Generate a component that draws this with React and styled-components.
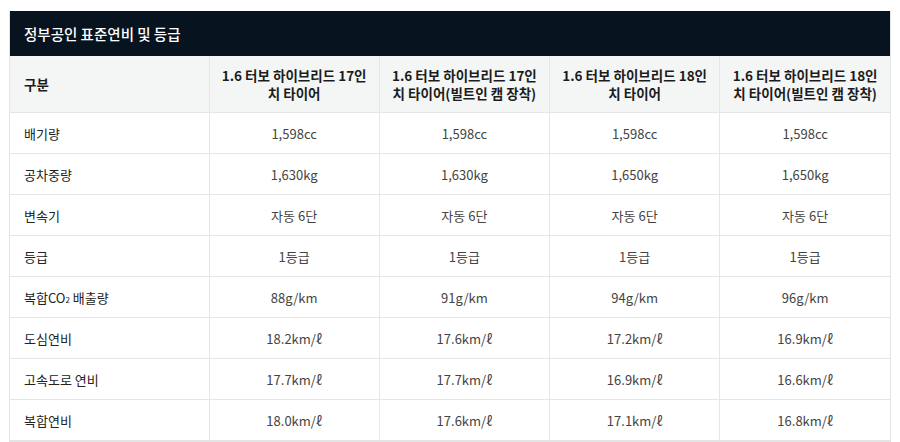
import React from "react";
import styled, { createGlobalStyle } from "styled-components";

const Global = createGlobalStyle`
  html, body { margin: 0; padding: 0; background: #ffffff; }
  body { font-family: "Noto Sans CJK KR", "Noto Sans", sans-serif; }
`;

const Page = styled.div`
  padding: 11px 9px 0 9px;
  width: 882px;
`;

const Panel = styled.section`
  border: 1px solid #e2e4e6;
  border-top: none;
`;

const Title = styled.h2`
  margin: 0;
  height: 45px;
  display: flex;
  align-items: center;
  padding: 0 14px;
  background: #07131f;
  color: #ffffff;
  font-size: 14.5px;
  font-weight: 500;
`;

const Table = styled.table`
  width: 100%;
  border-collapse: collapse;
  table-layout: fixed;
`;

const Th = styled.th`
  background: #f4f6f6;
  height: 56px;
  padding: 0 12px;
  font-size: 13.5px;
  font-weight: 700;
  color: #1c1c1c;
  line-height: 18px;
  text-align: ${(p) => (p.$first ? "left" : "center")};
  padding-left: ${(p) => (p.$first ? "14px" : "12px")};
  border-left: ${(p) => (p.$first ? "none" : "1px solid #e4e6e8")};
  border-bottom: 1px solid #e4e6e8;
`;

const Td = styled.td`
  height: 40px;
  padding: 0 10px;
  font-size: 13px;
  color: ${(p) => (p.$label ? "#222222" : "#444444")};
  text-align: ${(p) => (p.$label ? "left" : "center")};
  padding-left: ${(p) => (p.$label ? "14px" : "10px")};
  border-left: ${(p) => (p.$label ? "none" : "1px solid #e4e6e8")};
  border-bottom: 1px solid #e4e6e8;
`;

const Row = styled.tr``;

const Sub = styled.span`
  font-size: 8px;
  vertical-align: baseline;
`;

const headers = [
  "1.6 터보 하이브리드 17인치 타이어",
  "1.6 터보 하이브리드 17인치 타이어(빌트인 캠 장착)",
  "1.6 터보 하이브리드 18인치 타이어",
  "1.6 터보 하이브리드 18인치 타이어(빌트인 캠 장착)",
];

const rows = [
  { label: "배기량", values: ["1,598cc", "1,598cc", "1,598cc", "1,598cc"] },
  { label: "공차중량", values: ["1,630kg", "1,630kg", "1,650kg", "1,650kg"] },
  { label: "변속기", values: ["자동 6단", "자동 6단", "자동 6단", "자동 6단"] },
  { label: "등급", values: ["1등급", "1등급", "1등급", "1등급"] },
  {
    label: (
      <>
        복합CO<Sub>2</Sub> 배출량
      </>
    ),
    values: ["88g/km", "91g/km", "94g/km", "96g/km"],
  },
  { label: "도심연비", values: ["18.2km/ℓ", "17.6km/ℓ", "17.2km/ℓ", "16.9km/ℓ"] },
  { label: "고속도로 연비", values: ["17.7km/ℓ", "17.7km/ℓ", "16.9km/ℓ", "16.6km/ℓ"] },
  { label: "복합연비", values: ["18.0km/ℓ", "17.6km/ℓ", "17.1km/ℓ", "16.8km/ℓ"] },
];

export default function App() {
  return (
    <Page>
      <Global />
      <Panel>
        <Title>정부공인 표준연비 및 등급</Title>
        <Table>
          <colgroup>
            <col style={{ width: "199px" }} />
            <col />
            <col />
            <col />
            <col />
          </colgroup>
          <thead>
            <Row>
              <Th $first>구분</Th>
              {headers.map((h) => (
                <Th key={h}>{h}</Th>
              ))}
            </Row>
          </thead>
          <tbody>
            {rows.map((r, i) => (
              <Row key={i}>
                <Td $label>{r.label}</Td>
                {r.values.map((v, j) => (
                  <Td key={j}>{v}</Td>
                ))}
              </Row>
            ))}
          </tbody>
        </Table>
      </Panel>
    </Page>
  );
}
